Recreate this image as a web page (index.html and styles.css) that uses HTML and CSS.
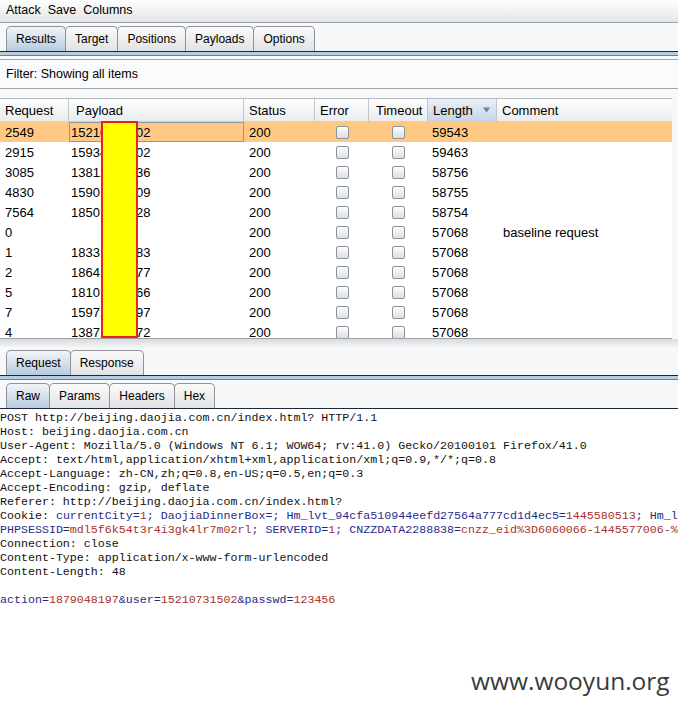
FILE: index.html
```html
<!DOCTYPE html>
<html>
<head>
<meta charset="utf-8">
<title>Intruder attack</title>
<link rel="stylesheet" href="styles.css">
</head>
<body>
<div class="app">
  <div class="menubar"><span>Attack</span><span>Save</span><span>Columns</span></div>

  <div class="tabstrip">
    <div class="tab sel">Results</div>
    <div class="tab">Target</div>
    <div class="tab">Positions</div>
    <div class="tab">Payloads</div>
    <div class="tab">Options</div>
  </div>
  <div class="tabline"></div>

  <div class="filter">Filter: Showing all items</div>

  <div class="results">
    <div class="grid head">
      <div class="hc">Request</div>
      <div class="hc pay">Payload</div>
      <div class="hc">Status</div>
      <div class="hc">Error</div>
      <div class="hc to">Timeout</div>
      <div class="hc sorted">Length<svg class="arrow" width="7" height="6" viewBox="0 0 7 6"><path d="M0 0.5 H7 L3.5 5.5 Z" fill="#5e86ad"/></svg></div>
      <div class="hc last">Comment</div>
    </div>

    <div class="grid row selrow">
      <div class="c">2549</div><div class="c p focus">15210731502</div><div class="c">200</div>
      <div class="cb"><span class="chk"></span></div><div class="cb"><span class="chk"></span></div>
      <div class="c len">59543</div><div class="c"></div>
    </div>
    <div class="grid row">
      <div class="c">2915</div><div class="c p">15934568802</div><div class="c">200</div>
      <div class="cb"><span class="chk"></span></div><div class="cb"><span class="chk"></span></div>
      <div class="c len">59463</div><div class="c"></div>
    </div>
    <div class="grid row">
      <div class="c">3085</div><div class="c p">13812345636</div><div class="c">200</div>
      <div class="cb"><span class="chk"></span></div><div class="cb"><span class="chk"></span></div>
      <div class="c len">58756</div><div class="c"></div>
    </div>
    <div class="grid row">
      <div class="c">4830</div><div class="c p">15901234509</div><div class="c">200</div>
      <div class="cb"><span class="chk"></span></div><div class="cb"><span class="chk"></span></div>
      <div class="c len">58755</div><div class="c"></div>
    </div>
    <div class="grid row">
      <div class="c">7564</div><div class="c p">18501234528</div><div class="c">200</div>
      <div class="cb"><span class="chk"></span></div><div class="cb"><span class="chk"></span></div>
      <div class="c len">58754</div><div class="c"></div>
    </div>
    <div class="grid row">
      <div class="c">0</div><div class="c p"></div><div class="c">200</div>
      <div class="cb"><span class="chk"></span></div><div class="cb"><span class="chk"></span></div>
      <div class="c len">57068</div><div class="c cm">baseline request</div>
    </div>
    <div class="grid row">
      <div class="c">1</div><div class="c p">18331234583</div><div class="c">200</div>
      <div class="cb"><span class="chk"></span></div><div class="cb"><span class="chk"></span></div>
      <div class="c len">57068</div><div class="c"></div>
    </div>
    <div class="grid row">
      <div class="c">2</div><div class="c p">18641234577</div><div class="c">200</div>
      <div class="cb"><span class="chk"></span></div><div class="cb"><span class="chk"></span></div>
      <div class="c len">57068</div><div class="c"></div>
    </div>
    <div class="grid row">
      <div class="c">5</div><div class="c p">18101234566</div><div class="c">200</div>
      <div class="cb"><span class="chk"></span></div><div class="cb"><span class="chk"></span></div>
      <div class="c len">57068</div><div class="c"></div>
    </div>
    <div class="grid row">
      <div class="c">7</div><div class="c p">15971234597</div><div class="c">200</div>
      <div class="cb"><span class="chk"></span></div><div class="cb"><span class="chk"></span></div>
      <div class="c len">57068</div><div class="c"></div>
    </div>
    <div class="grid row">
      <div class="c">4</div><div class="c p">13871234572</div><div class="c">200</div>
      <div class="cb"><span class="chk"></span></div><div class="cb"><span class="chk"></span></div>
      <div class="c len">57068</div><div class="c"></div>
    </div>

    <div class="redact"></div>
  </div>

  <div class="splitter"></div>

  <div class="tabstrip">
    <div class="tab sel">Request</div>
    <div class="tab">Response</div>
  </div>
  <div class="tabline"></div>

  <div class="tabstrip sub">
    <div class="tab sel">Raw</div>
    <div class="tab">Params</div>
    <div class="tab">Headers</div>
    <div class="tab">Hex</div>
  </div>
  <div class="subline"></div>

<pre class="raw">POST http://beijing.daojia.com.cn/index.html? HTTP/1.1
Host: beijing.daojia.com.cn
User-Agent: Mozilla/5.0 (Windows NT 6.1; WOW64; rv:41.0) Gecko/20100101 Firefox/41.0
Accept: text/html,application/xhtml+xml,application/xml;q=0.9,*/*;q=0.8
Accept-Language: zh-CN,zh;q=0.8,en-US;q=0.5,en;q=0.3
Accept-Encoding: gzip, deflate
Referer: http://beijing.daojia.com.cn/index.html?
Cookie: <span class="k">currentCity=</span><span class="v">1</span><span class="k">; DaojiaDinnerBox=; Hm_lvt_94cfa510944eefd27564a777cd1d4ec5=</span><span class="v">1445580513</span><span class="k">; Hm_l</span>
<span class="k">PHPSESSID=</span><span class="v">mdl5f6k54t3r4i3gk4lr7m02rl</span><span class="k">; SERVERID=</span><span class="v">1</span><span class="k">; CNZZDATA2288838=</span><span class="v">cnzz_eid%3D6060066-1445577006-%</span>
Connection: close
Content-Type: application/x-www-form-urlencoded
Content-Length: 48

<span class="k">action=</span><span class="v">1879048197</span><span class="k">&amp;user=</span><span class="v">15210731502</span><span class="k">&amp;passwd=</span><span class="v">123456</span></pre>

  <div class="watermark">www.wooyun.org</div>
</div>
</body>
</html>
```

FILE: styles.css
```css
* { box-sizing: border-box; }

html, body {
  margin: 0;
  padding: 0;
}

body {
  width: 678px;
  height: 712px;
  overflow: hidden;
  background: #f7f8f9;
  font-family: "Liberation Sans", Arial, sans-serif;
  font-size: 12.5px;
  color: #000;
}

.app {
  position: relative;
  width: 678px;
  height: 712px;
  display: flex;
  flex-direction: column;
}

/* menu bar */
.menubar {
  height: 23px;
  flex: none;
  display: flex;
  align-items: center;
  gap: 7px;
  padding: 0 0 2px 6px;
  background: linear-gradient(#fefefe, #e3e5e8);
  border-bottom: 1px solid #9ba0a6;
}

/* tabs */
.tabstrip {
  flex: none;
  display: flex;
  padding: 3px 0 0 6px;
}

.tab {
  height: 25px;
  display: flex;
  align-items: center;
  padding: 0 9px;
  font-size: 12px;
  border: 1px solid #8f9398;
  border-bottom: none;
  border-radius: 5px 5px 0 0;
  background: linear-gradient(#fbfbfb, #e1e2e4);
  margin-right: -1px;
  white-space: nowrap;
}

.tab.sel {
  background: linear-gradient(#f1f5f8, #b7cbdf);
}

.tabline {
  flex: none;
  height: 5px;
  border-top: 1px solid #1e2834;
  border-bottom: 1px solid #6f8193;
  background: #b9cde1;
}

.subline {
  flex: none;
  height: 1px;
  background: #1e2834;
}

.tabstrip.sub {
  padding-top: 3px;
}

/* filter */
.filter {
  flex: none;
  margin-top: 3px;
  height: 30px;
  display: flex;
  align-items: center;
  padding-left: 6px;
  background: #fafbfc;
  border-top: 1px solid #a4a7aa;
  border-bottom: 1px solid #a4a7aa;
}

/* results table */
.results {
  flex: none;
  position: relative;
  margin-top: 9px;
  width: 672px;
  height: 241px;
  overflow: hidden;
  background: #fff;
  border-top: 1px solid #b6b9bc;
  border-bottom: 1px solid #9fa3a7;
  font-size: 13px;
}

.grid {
  display: grid;
  grid-template-columns: 69px 175px 71px 54px 59px 69px 175px;
}

.head {
  height: 23px;
  background: linear-gradient(#fdfdfd, #ebecee);
  border-bottom: 1px solid #d0d2d4;
}

.hc {
  display: flex;
  align-items: center;
  padding-left: 5px;
  border-right: 1px solid #c3c6c9;
  white-space: nowrap;
}

.hc.pay { padding-left: 7px; }
.hc.to { padding-left: 7px; }
.hc.last { border-right: none; }

.hc.sorted {
  justify-content: space-between;
  padding-right: 6px;
  background: linear-gradient(#eaf0f6, #c6d6e6);
}

.arrow { display: block; }

.row {
  height: 20px;
}

.selrow {
  background: #ffc883;
}

.c {
  display: flex;
  align-items: center;
  padding-left: 5px;
  white-space: nowrap;
  overflow: hidden;
}

.c.p { padding-left: 2px; }
.c.len { padding-left: 4px; }
.c.cm { padding-left: 6px; }

.c.focus {
  border: 1px solid #8a98a8;
  padding-left: 1px;
}

.cb {
  display: flex;
  align-items: center;
  justify-content: center;
}

.chk {
  width: 13px;
  height: 13px;
  border: 1px solid #8c939a;
  border-radius: 2px;
  background: linear-gradient(#fdfdfd, #dcdfe3);
}

.redact {
  position: absolute;
  left: 101px;
  top: 22px;
  width: 37px;
  height: 217px;
  background: #ffff00;
  border: 2px solid #e3261c;
}

/* splitter */
.splitter {
  flex: none;
  height: 8px;
  background: linear-gradient(#d9dadc, #f3f4f5);
}

/* raw request */
.raw {
  flex: 1;
  margin: 0;
  padding: 2px 0 0 0;
  background: #fff;
  font-family: "Liberation Mono", "Courier New", monospace;
  font-size: 11.65px;
  line-height: 14px;
  color: #111;
  white-space: pre;
  overflow: hidden;
}

.raw .k { color: #1f2c8c; }
.raw .v { color: #a8322c; }

/* watermark overlay */
.watermark {
  position: absolute;
  left: 471px;
  top: 668px;
  font-family: "Open Sans", sans-serif;
  font-size: 24.5px;
  line-height: 25px;
  color: #3b3b3b;
}
```
